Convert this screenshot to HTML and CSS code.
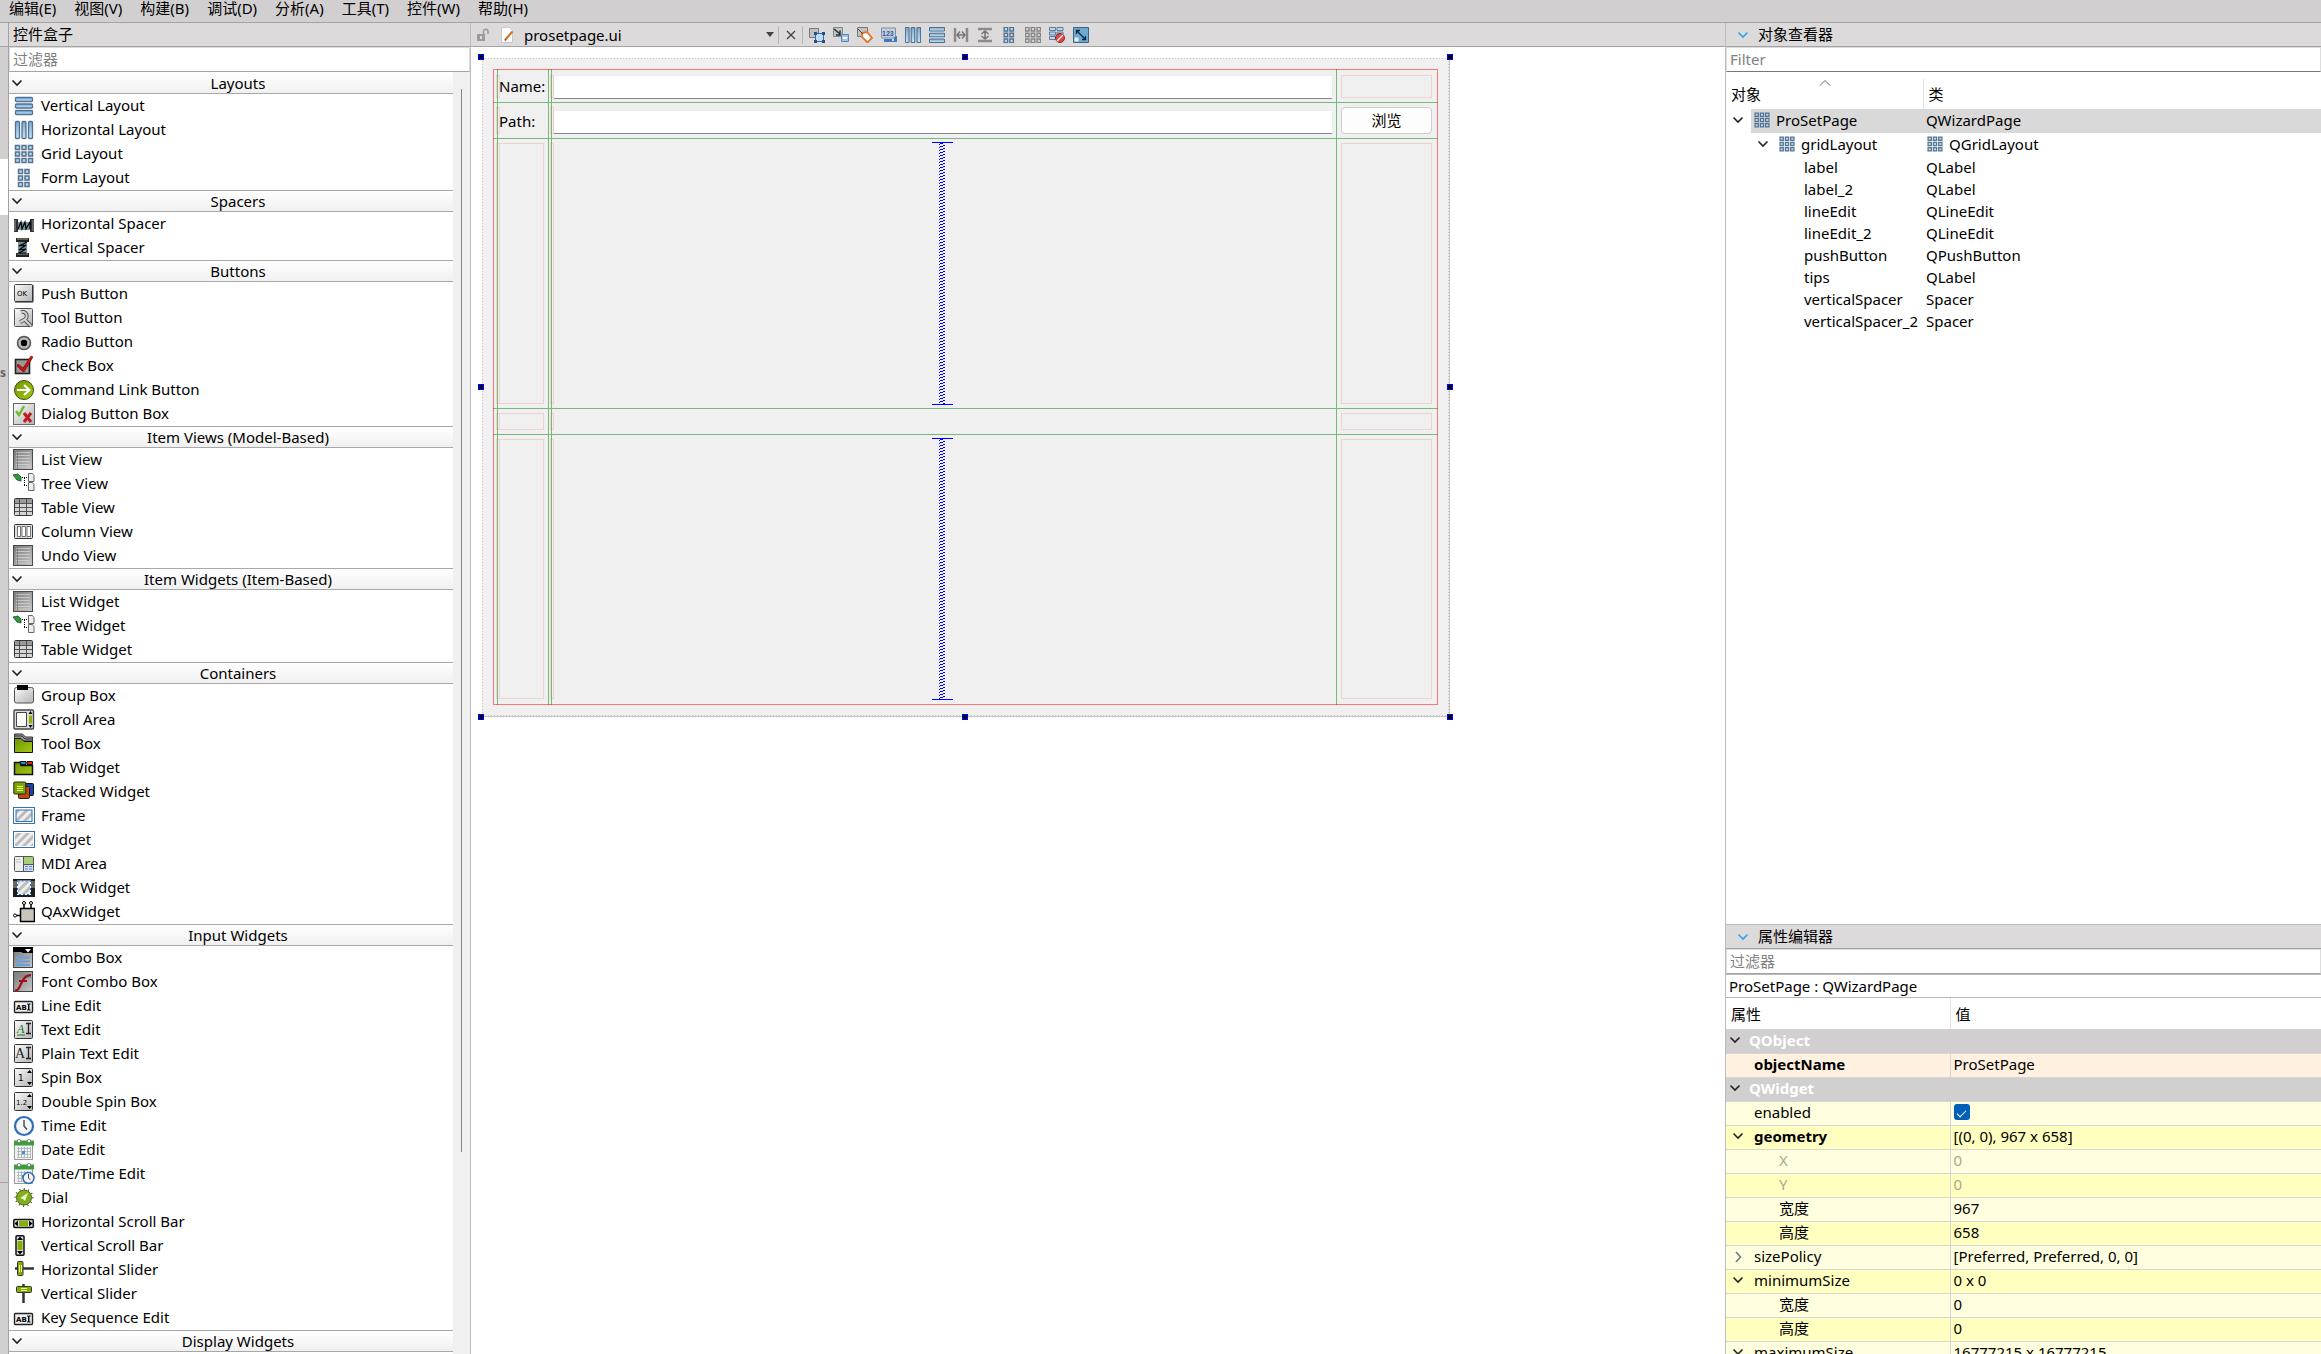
FILE: index.html
```html
<!DOCTYPE html>
<html lang="zh-CN">
<head>
<meta charset="utf-8">
<title>prosetpage.ui</title>
<link rel="stylesheet" href="styles.css">
</head>
<body>
<svg class="sprite" aria-hidden="true">
  <defs>
    <linearGradient id="steel" x1="0" y1="0" x2="0" y2="1"><stop offset="0" stop-color="#7ba8cc"/><stop offset="1" stop-color="#c6e6fa"/></linearGradient>
    <linearGradient id="gray" x1="0" y1="0" x2="1" y2="1"><stop offset="0" stop-color="#fbfbfb"/><stop offset="1" stop-color="#b4b4b4"/></linearGradient>
    <linearGradient id="dark" x1="0" y1="0" x2="1" y2="1"><stop offset="0" stop-color="#777"/><stop offset="1" stop-color="#c8c8c8"/></linearGradient>
    <linearGradient id="lime" x1="0" y1="0" x2="1" y2="1"><stop offset="0" stop-color="#6f9400"/><stop offset="1" stop-color="#a3c916"/></linearGradient>
    <pattern id="hatch" width="6" height="6" patternUnits="userSpaceOnUse" patternTransform="rotate(45)"><rect width="6" height="6" fill="#efefef"/><rect width="3" height="6" fill="#bdbdbd"/></pattern>
    <pattern id="coil" width="6" height="3" patternUnits="userSpaceOnUse"><path d="M4 0h2v1h-2zM1 1h3v1h-3zM0 2h1v1h-1z" fill="#00f"/></pattern>
  </defs>
  <symbol id="chev" viewBox="0 0 12 8"><path d="M1.500 1.500L6 6l4.500-4.500" fill="none" stroke="currentColor" stroke-width="1.600"/></symbol>
  <symbol id="chev-r" viewBox="0 0 12 12"><path d="M4 1l4.500 5L4 11" fill="none" stroke="currentColor" stroke-width="1.600"/></symbol>
  <symbol id="vbox" viewBox="0 0 22 22"><g fill="url(#steel)" stroke="#4f7196" stroke-width="1.300"><rect x="2.500" y="2.500" width="17" height="4" rx="1"/><rect x="2.500" y="9" width="17" height="4" rx="1"/><rect x="2.500" y="15.500" width="17" height="4" rx="1"/></g></symbol>
  <symbol id="hbox" viewBox="0 0 22 22"><g fill="url(#steel)" stroke="#4f7196" stroke-width="1.300"><rect x="2.500" y="2.500" width="4" height="17" rx="1"/><rect x="9" y="2.500" width="4" height="17" rx="1"/><rect x="15.500" y="2.500" width="4" height="17" rx="1"/></g></symbol>
  <symbol id="grid" viewBox="0 0 22 22"><g fill="#b4d8ef" stroke="#55728f" stroke-width="1.500"><path d="M2.500 2.500h4v4h-4zM9 2.500h4v4h-4zM15.500 2.500h4v4h-4zM2.500 9h4v4h-4zM9 9h4v4h-4zM15.500 9h4v4h-4zM2.500 15.500h4v4h-4zM9 15.500h4v4h-4zM15.500 15.500h4v4h-4z"/></g></symbol>
  <symbol id="grid-off" viewBox="0 0 22 22"><g fill="#d2d2d2" stroke="#858585" stroke-width="1.500"><path d="M2.500 2.500h4v4h-4zM9 2.500h4v4h-4zM15.500 2.500h4v4h-4zM2.500 9h4v4h-4zM9 9h4v4h-4zM15.500 9h4v4h-4zM2.500 15.500h4v4h-4zM9 15.500h4v4h-4zM15.500 15.500h4v4h-4z"/></g></symbol>
  <symbol id="form" viewBox="0 0 22 22"><g fill="#b4d8ef" stroke="#55728f" stroke-width="1.500"><path d="M5.500 2.500h4v4h-4zM12 2.500h4v4h-4zM5.500 9h4v4h-4zM12 9h4v4h-4zM5.500 15.500h4v4h-4zM12 15.500h4v4h-4z"/></g></symbol>
  <symbol id="hspacer" viewBox="0 0 22 22"><path d="M1 6h4v13H1zM17 6h4v13h-4z" fill="#333"/><path d="M2 7v11M20 7v11" stroke="#999"/><path d="M5 9h12v8H5z" fill="#78909e"/><path d="M5 16L8 9l1 7 3-7 1 7 4-7v7" fill="none" stroke="#000" stroke-width="1.200"/></symbol>
  <symbol id="vspacer" viewBox="0 0 22 22"><path d="M3 1h13v4H3zM3 16h13v4H3z" fill="#222"/><path d="M4 2h11M4 17h11" stroke="#999"/><path d="M5 5h9v11H5z" fill="#78909e"/><path d="M14 5L6 9l7-1-7 5 7-1-7 4h7" fill="none" stroke="#000" stroke-width="1.200"/></symbol>
  <symbol id="push" viewBox="0 0 22 22"><rect x="1.500" y="1.500" width="18" height="17" rx="1" fill="url(#gray)" stroke="#444"/><path d="M2 19h18V2" fill="none" stroke="#222"/></symbol>
  <symbol id="tool" viewBox="0 0 22 22"><rect x="1.500" y="1.500" width="18" height="18" rx="1" fill="url(#gray)" stroke="#555"/><path d="M8 5a4 4 0 1 1 3 8L7 15M11 12l7 7" fill="none" stroke="#555" stroke-width="4"/><path d="M8 5a4 4 0 1 1 3 8L7 15M11 12l7 7" fill="none" stroke="#ccd3d8" stroke-width="2"/></symbol>
  <symbol id="radio" viewBox="0 0 22 22"><circle cx="11" cy="12" r="6.500" fill="#bbb" stroke="#555" stroke-width="1.500"/><circle cx="11" cy="12" r="3.200"/></symbol>
  <symbol id="check" viewBox="0 0 22 22"><rect x="2.500" y="4.500" width="14" height="14" fill="#999" stroke="#222" stroke-width="1.600"/><path d="M5 9l5 4 8-12 2 1-9 15-2-1-5-5z" fill="#cc1418" stroke="#700" stroke-width=".6"/></symbol>
  <symbol id="link" viewBox="0 0 22 22"><circle cx="11" cy="11" r="9.500" fill="url(#lime)" stroke="#3f4d10"/><path d="M4 11h12M11 6l5.500 5-5.500 5" fill="none" stroke="#fff" stroke-width="2"/></symbol>
  <symbol id="dialog" viewBox="0 0 22 22"><rect x=".5" y=".5" width="21" height="21" fill="url(#gray)" stroke="#666"/><path d="M3 8l3 4L11 3" fill="none" stroke="#6cc02f" stroke-width="2.500"/><path d="M11 10l7 9M18 10l-7 9" stroke="#c01a22" stroke-width="3"/></symbol>
  <symbol id="list" viewBox="0 0 22 22"><rect x=".5" y=".5" width="19" height="20" fill="url(#dark)" stroke="#4a4a4a"/><path d="M3 3.500h14M3 6.500h14M3 9.500h14M3 12.500h14M3 15.500h14M3 18h14" stroke="#d4d4d4" stroke-width=".8"/><path d="M4.500 1v19" stroke="#888"/></symbol>
  <symbol id="tree" viewBox="0 0 22 22"><path d="M0 2l5-1 3 3v4L4 7z" fill="#2f9a3c" stroke="#164f1c" stroke-width=".8"/><path d="M9 4.500h6M11.500 5v8M11 12.500h4" stroke="#000" stroke-dasharray="1 1"/><path d="M15.500.5h4l1.500 2v6h-5.500zM15.500 9.500h4l1.500 2v6h-5.500z" fill="#eee" stroke="#666"/></symbol>
  <symbol id="table" viewBox="0 0 22 22"><rect x="1.500" y="1.500" width="18" height="17" rx="1" fill="#d5d5d5" stroke="#333"/><path d="M2 2h17v4H2z" fill="#999"/><path d="M2 6.500h17M2 10.500h17M2 14.500h17M6.500 2v16M13.500 2v16" stroke="#444" stroke-width=".9"/></symbol>
  <symbol id="column" viewBox="0 0 22 22"><rect x="1.500" y="3.500" width="18" height="14" rx="1" fill="#ddd" stroke="#333"/><path d="M4.500 5.500h3v10h-3zM9 5.500h3.500v10H9zM14 5.500h3.500v10H14z" fill="#fff" stroke="#555" stroke-width=".8"/></symbol>
  <symbol id="group" viewBox="0 0 22 22"><rect x="1.500" y="2.500" width="19" height="15.500" rx="2" fill="url(#gray)" stroke="#555"/><path d="M4 0h11v5H4z"/></symbol>
  <symbol id="scroll" viewBox="0 0 22 22"><rect x="1" y="1" width="19.500" height="19" rx="1" fill="#ddd" stroke="#444" stroke-width="1.400"/><path d="M3.500 3.500h10v14h-10z" fill="#fff" stroke="#444"/><path d="M16 6.500h3v8h-3z" fill="#8bb400"/><path d="M15.500 5l2-3 2 3zM15.500 16l2 3 2-3z"/></symbol>
  <symbol id="toolbox" viewBox="0 0 22 22"><path d="M1.500 1h8l3 3h7v4h-18z" fill="#999" stroke="#333"/><path d="M1.500 5.500H8l3 3h8.500v11h-18z" fill="url(#lime)" stroke="#111"/><path d="M2 3h7l3 3h7" fill="none" stroke="#333"/></symbol>
  <symbol id="tab" viewBox="0 0 22 22"><path d="M1.500 5.500H7l1 3h11.500v9h-18z" fill="url(#lime)" stroke="#111" stroke-width="1.500"/><path d="M7 4.500h6v3H8z" fill="#1c86d8" stroke="#111"/><path d="M14 4.500h5.500v3H14z" fill="#d8201c" stroke="#111"/></symbol>
  <symbol id="stack" viewBox="0 0 22 22"><rect x="11.500" y="2.500" width="9" height="12" rx="1" fill="#1a45a8" stroke="#111"/><rect x="5.500" y="5.500" width="11" height="12" rx="1" fill="#bf4a14" stroke="#222"/><rect x=".8" y="1" width="12" height="12" rx="1" fill="#7fa600" stroke="#222"/><path d="M4 5.500h6M4 7.500h6M4 9.500h6" stroke="#dfff80"/></symbol>
  <symbol id="frame" viewBox="0 0 22 22"><rect x=".5" y="2.500" width="21" height="16" fill="#fff" stroke="#3273bd"/><rect x="3" y="5" width="16" height="11.500" fill="url(#hatch)" stroke="#3273bd"/></symbol>
  <symbol id="widget" viewBox="0 0 22 22"><rect x=".5" y="2.500" width="21" height="16" fill="#fff" stroke="#3273bd"/><rect x="2" y="4" width="18" height="13" fill="url(#hatch)"/></symbol>
  <symbol id="mdi" viewBox="0 0 22 22"><rect x="1.500" y="3.500" width="19" height="15" rx="1" fill="#eee" stroke="#555"/><path d="M11 4h9v7h-9z" fill="#a6cf78"/><path d="M11 12h9v6h-9z" fill="#cfdff5"/><path d="M10.500 4v14M11 11.500h9" stroke="#555"/><path d="M12 13.500h3M16 13.500h3M12 16h3M16 16h3" stroke="#5a89cf"/><path d="M3 6.500h4M3 9h5" stroke="#bbb"/></symbol>
  <symbol id="dock" viewBox="0 0 22 22"><path d="M0 2h22v18H0z" fill="#1c1c1c"/><path d="M0 4h4v7H0zM18 4h4v7h-4z" fill="#666"/><rect x="4.500" y="4" width="13" height="13.500" fill="url(#hatch)" stroke="#fff"/><rect x="4.500" y="4" width="13" height="13.500" fill="none" stroke="#2a6bc0" stroke-dasharray="2 2"/></symbol>
  <symbol id="qax" viewBox="0 0 22 22"><path d="M7.500 7.500h14v13h-14z" fill="#c9c5bd" stroke="#000" stroke-width="1.500"/><path d="M11 7V3M18 7V3M7 14.500H3" stroke="#000" stroke-width="1.500"/><g fill="#fff" stroke="#000"><circle cx="11" cy="2" r="1.500"/><circle cx="18" cy="2" r="1.500"/><circle cx="2" cy="14.500" r="1.500"/></g></symbol>
  <symbol id="combo" viewBox="0 0 22 22"><rect x=".5" y=".5" width="19" height="20" fill="url(#dark)" stroke="#444"/><path d="M0 0h20v6H10L8 5H0z"/><path d="M12 2h6l-3 3.500z" fill="#fff"/><path d="M3 10.500h14M3 14.500h14M3 18h14" stroke="#6aa0dc" stroke-width="2"/></symbol>
  <symbol id="fontcombo" viewBox="0 0 22 22"><rect x=".5" y=".5" width="19" height="20" fill="url(#dark)" stroke="#444"/><path d="M3 3h15v4H3z" fill="#888"/><path d="M2 19c6 3 5-15 16-15M6 10h8" fill="none" stroke="#a01018" stroke-width="2.200"/></symbol>
  <symbol id="lineedit" viewBox="0 0 22 22"><rect x="1.500" y="6.500" width="18" height="11" rx="1" fill="#eee" stroke="#222" stroke-width="1.400"/><path d="M14 9h1.500v6H14M17.500 9H16v6h1.500" fill="none" stroke="#000"/></symbol>
  <symbol id="textedit" viewBox="0 0 22 22"><rect x="1.500" y="1.500" width="18" height="18" rx="1" fill="url(#gray)" stroke="#333"/><path d="M4 16h8" stroke="#157a1e"/><path d="M13 4.500h5M13 14.500h5M15.500 4v11" stroke="#222" stroke-width="1.300"/></symbol>
  <symbol id="plain" viewBox="0 0 22 22"><rect x="1.500" y="1.500" width="18" height="18" rx="1" fill="url(#gray)" stroke="#333"/><path d="M13 4.500h5M13 15.500h5M15.500 4v12" stroke="#222" stroke-width="1.300"/></symbol>
  <symbol id="spin" viewBox="0 0 22 22"><rect x="1.500" y="1.500" width="18" height="18" rx="1" fill="url(#gray)" stroke="#333"/><path d="M14 6l2.500-3L19 6zM14 15l2.500 3 2.500-3z"/></symbol>
  <symbol id="time" viewBox="0 0 22 22"><circle cx="11" cy="11" r="9" fill="#f4f6f7" stroke="#2c6fb8" stroke-width="2.200"/><path d="M11 5v6l3 3.500" fill="none" stroke="#444" stroke-width="1.400"/></symbol>
  <symbol id="date" viewBox="0 0 22 22"><path d="M1.500 3h18v17.500h-18z" fill="#f0f2f3" stroke="#999"/><path d="M1 1.500h20v5H1z" fill="#3e9e38"/><path d="M4 9.500h14M4 12.500h14M4 15.500h14M4 18.500h14M5.500 8v11M8.500 8v11M11.500 8v11M14.500 8v11M17.500 8v11" stroke="#a9b1b8" stroke-width=".8"/><path d="M9 12h3v3H9z" fill="#4b8fdc"/><circle cx="6" cy="2" r="1.700" fill="#eee" stroke="#888"/><circle cx="16" cy="2" r="1.700" fill="#eee" stroke="#888"/></symbol>
  <symbol id="datetime" viewBox="0 0 22 22"><use href="#date" width="22" height="22"/><circle cx="15.500" cy="15" r="5.500" fill="#f4f6f7" stroke="#2c6fb8" stroke-width="1.500"/><path d="M15.500 11v4l2 2" fill="none" stroke="#444"/></symbol>
  <symbol id="dial" viewBox="0 0 22 22"><circle cx="11" cy="10.500" r="8.500" fill="none" stroke="#555" stroke-width="2" stroke-dasharray="1 3.400"/><circle cx="11" cy="10.500" r="7.500" fill="#83ac1c" stroke="#4c6a10"/><path d="M15 6l-3 8-2-2-3-1z" fill="#eef7cf"/></symbol>
  <symbol id="hscroll" viewBox="0 0 22 22"><rect x=".8" y="8.500" width="19.500" height="8" rx="1" fill="#ddd" stroke="#111" stroke-width="1.500"/><path d="M6 10h9v5H6z" fill="#86ae00"/><path d="M5 9.500v6l-3.500-3zM16 9.500v6l3.500-3z"/></symbol>
  <symbol id="vscroll" viewBox="0 0 22 22"><rect x="3" y=".8" width="8" height="19.500" rx="1" fill="#ddd" stroke="#111" stroke-width="1.500"/><path d="M4.500 6h5v9h-5z" fill="#86ae00"/><path d="M4 5h6L7 1.500zM4 16h6l-3 3.500z"/></symbol>
  <symbol id="hslider" viewBox="0 0 22 22"><path d="M2 9.500h19" stroke="#333" stroke-width="2.500"/><rect x="4.500" y="2.500" width="5.500" height="14" rx="1" fill="#86ae00" stroke="#333"/><path d="M6.500 6v7M8.500 6v7" stroke="#e6f5a8"/></symbol>
  <symbol id="vslider" viewBox="0 0 22 22"><path d="M10.500 1v19" stroke="#333" stroke-width="2.500"/><rect x="3.500" y="3.500" width="15" height="6" rx="1" fill="#86ae00" stroke="#333"/><path d="M8 5.500h6M8 7.500h6" stroke="#e6f5a8"/></symbol>
  <symbol id="lock" viewBox="0 0 16 16"><path d="M1 7h8v7H1z" fill="#9b9b9b"/><path d="M7.500 7V4.500a2.200 2.200 0 0 1 4.500 0V7" fill="none" stroke="#9b9b9b" stroke-width="1.500"/><path d="M4 9h2v3H4z" fill="#ddd"/></symbol>
  <symbol id="file" viewBox="0 0 16 16"><path d="M1.500.5h8l3 3v12h-11z" fill="#fff" stroke="#c9c9c9"/><path d="M5 13l7.500-8.500" stroke="#d0782a" stroke-width="2.200"/><path d="M4.500 14l1-2 1 1z" fill="#333"/></symbol>
  <symbol id="e-widgets" viewBox="0 0 16 16"><path d="M.5 1.500h9v9h-9z" fill="#c2c2c2" stroke="#777"/><path d="M6.500 6.500h8v8h-8z" fill="#bcdcf8" stroke="#3568b0"/><path d="M5 5h3v3H5zM13 5h3v3h-3zM5 13h3v3H5zM13 13h3v3h-3z" fill="#244c86"/></symbol>
  <symbol id="e-signals" viewBox="0 0 16 16"><path d="M.5.5h9v9h-9z" fill="#c2c2c2" stroke="#888"/><path d="M8.500 7.500h7v7h-7z" fill="#9cc4ec" stroke="#5f84b4"/><path d="M10 11h4" stroke="#fff" stroke-width="2"/><path d="M1 2l6 5M7 3.500V8H3" fill="none" stroke="#234" stroke-width="1.500"/></symbol>
  <symbol id="e-buddies" viewBox="0 0 16 16"><path d="M.5.5h10v9H.5z" fill="#c2c2c2" stroke="#777"/><path d="M5 6l5-1 5 6-4.500 4.500L5 10z" fill="#fff" stroke="#e0762a" stroke-width="1.800"/><path d="M1 2l5 5" stroke="#444"/></symbol>
  <symbol id="e-tab" viewBox="0 0 16 16"><path d="M.5 1h14v10H.5z" fill="#c9ced6" stroke="#8090a8"/><path d="M3 12h8v2h2v-4l3-1v6H3z" fill="#3c78c4"/></symbol>
  <symbol id="e-hsplit" viewBox="0 0 16 16"><path d="M2 1v14M14 1v14" stroke="#8a8a8a" stroke-width="2.500"/><path d="M4 8h8M7 4.500L4 8l3 3.500M9 4.500L12 8l-3 3.500" fill="none" stroke="#777" stroke-width="1.500"/></symbol>
  <symbol id="e-vsplit" viewBox="0 0 16 16"><path d="M1 2h14M1 14h14" stroke="#8a8a8a" stroke-width="2.500"/><path d="M8 4v8M4.500 7L8 4l3.500 3M4.500 9L8 12l3.500-3" fill="none" stroke="#777" stroke-width="1.500"/></symbol>
  <symbol id="e-break" viewBox="0 0 16 16"><path d="M.5.5h6v3h-6zM8 .5h6v3H8zM.5 5h6v3h-6zM8 5h6v3H8zM.5 9.500h6v3h-6z" fill="#b9d8ee" stroke="#5e7d9c"/><circle cx="11" cy="11" r="4.500" fill="#d84848" stroke="#a02020"/><path d="M8 14l6-6" stroke="#fff" stroke-width="1.300"/></symbol>
  <symbol id="e-adjust" viewBox="0 0 16 16"><path d="M.5.500h15v15H.5z" fill="#6fa9d2" stroke="#3a6488"/><path d="M1.500 10.500h4v4h-4z" fill="#e4f0f8"/><path d="M4 4l8 8M3.500 7V3.500H7M12.500 9v3.500H9" fill="none" stroke="#0c2742" stroke-width="1.300"/></symbol>
</svg>

<nav class="menubar">
  <button>编辑(E)</button><button>视图(V)</button><button>构建(B)</button><button>调试(D)</button><button>分析(A)</button><button>工具(T)</button><button>控件(W)</button><button>帮助(H)</button>
</nav>

<div class="workspace">
  <div class="rail"><div class="rail-head"></div><div class="rail-gap"></div><div class="rail-active"></div><div class="rail-modes">s</div><div class="rail-foot"></div></div>

  <aside class="box">
    <h2 class="title">控件盒子</h2>
    <input class="filter" type="text" placeholder="过滤器" aria-label="过滤器">
    <div class="box-body">
      <div class="cats">
        <section><button class="cat"><svg><use href="#chev"/></svg><span>Layouts</span></button><ul>
          <li><svg><use href="#vbox"/></svg>Vertical Layout</li><li><svg><use href="#hbox"/></svg>Horizontal Layout</li><li><svg><use href="#grid"/></svg>Grid Layout</li><li><svg><use href="#form"/></svg>Form Layout</li></ul></section>
        <section><button class="cat"><svg><use href="#chev"/></svg><span>Spacers</span></button><ul>
          <li><svg><use href="#hspacer"/></svg>Horizontal Spacer</li><li><svg><use href="#vspacer"/></svg>Vertical Spacer</li></ul></section>
        <section><button class="cat"><svg><use href="#chev"/></svg><span>Buttons</span></button><ul>
          <li><svg><use href="#push"/><text class="t-tiny" x="4" y="13">OK</text></svg>Push Button</li><li><svg><use href="#tool"/></svg>Tool Button</li><li><svg><use href="#radio"/></svg>Radio Button</li><li><svg><use href="#check"/></svg>Check Box</li><li><svg><use href="#link"/></svg>Command Link Button</li><li><svg><use href="#dialog"/></svg>Dialog Button Box</li></ul></section>
        <section><button class="cat"><svg><use href="#chev"/></svg><span>Item Views (Model-Based)</span></button><ul>
          <li><svg><use href="#list"/></svg>List View</li><li><svg><use href="#tree"/></svg>Tree View</li><li><svg><use href="#table"/></svg>Table View</li><li><svg><use href="#column"/></svg>Column View</li><li><svg><use href="#list"/></svg>Undo View</li></ul></section>
        <section><button class="cat"><svg><use href="#chev"/></svg><span>Item Widgets (Item-Based)</span></button><ul>
          <li><svg><use href="#list"/></svg>List Widget</li><li><svg><use href="#tree"/></svg>Tree Widget</li><li><svg><use href="#table"/></svg>Table Widget</li></ul></section>
        <section><button class="cat"><svg><use href="#chev"/></svg><span>Containers</span></button><ul>
          <li><svg><use href="#group"/></svg>Group Box</li><li><svg><use href="#scroll"/></svg>Scroll Area</li><li><svg><use href="#toolbox"/></svg>Tool Box</li><li><svg><use href="#tab"/></svg>Tab Widget</li><li><svg><use href="#stack"/></svg>Stacked Widget</li><li><svg><use href="#frame"/></svg>Frame</li><li><svg><use href="#widget"/></svg>Widget</li><li><svg><use href="#mdi"/></svg>MDI Area</li><li><svg><use href="#dock"/></svg>Dock Widget</li><li><svg><use href="#qax"/></svg>QAxWidget</li></ul></section>
        <section><button class="cat"><svg><use href="#chev"/></svg><span>Input Widgets</span></button><ul>
          <li><svg><use href="#combo"/></svg>Combo Box</li><li><svg><use href="#fontcombo"/></svg>Font Combo Box</li><li><svg><use href="#lineedit"/><text class="t-tiny t-bold" x="3" y="15">AB</text></svg>Line Edit</li><li><svg><use href="#textedit"/><text class="t-rich" x="4" y="14">A</text></svg>Text Edit</li><li><svg><use href="#plain"/><text class="t-serif" x="2" y="15">A</text></svg>Plain Text Edit</li><li><svg><use href="#spin"/><text class="t-num" x="5" y="14">1</text></svg>Spin Box</li><li><svg><use href="#spin"/><text class="t-tiny" x="3" y="14">1.2</text></svg>Double Spin Box</li><li><svg><use href="#time"/></svg>Time Edit</li><li><svg><use href="#date"/></svg>Date Edit</li><li><svg><use href="#datetime"/></svg>Date/Time Edit</li><li><svg><use href="#dial"/></svg>Dial</li><li><svg><use href="#hscroll"/></svg>Horizontal Scroll Bar</li><li><svg><use href="#vscroll"/></svg>Vertical Scroll Bar</li><li><svg><use href="#hslider"/></svg>Horizontal Slider</li><li><svg><use href="#vslider"/></svg>Vertical Slider</li><li><svg><use href="#lineedit"/><text class="t-tiny t-bold" x="3" y="15">AB</text></svg>Key Sequence Edit</li></ul></section>
        <section><button class="cat"><svg><use href="#chev"/></svg><span>Display Widgets</span></button></section>
      </div>
      <div class="track"><div class="thumb"></div></div>
    </div>
  </aside>

  <main class="editor">
    <div class="toolbar">
      <svg class="ic16"><use href="#lock"/></svg>
      <svg class="ic16"><use href="#file"/></svg>
      <select class="doc" aria-label="文件"><option>prosetpage.ui</option></select>
      <span class="drop"></span>
      <button class="close" aria-label="关闭"><svg viewBox="0 0 10 10"><path d="M1 1l8 8M9 1L1 9" stroke="#444" stroke-width="1.300"/></svg></button>
      <div class="tools">
        <button aria-label="编辑控件"><svg><use href="#e-widgets"/></svg></button>
        <button aria-label="编辑信号"><svg><use href="#e-signals"/></svg></button>
        <button aria-label="编辑伙伴"><svg><use href="#e-buddies"/></svg></button>
        <button aria-label="编辑顺序"><svg><use href="#e-tab"/><text class="t-order" x="1" y="9">123</text></svg></button>
        <button aria-label="水平布局"><svg viewBox="2 2 18 18"><use href="#hbox" width="22" height="22"/></svg></button>
        <button aria-label="垂直布局"><svg viewBox="2 2 18 18"><use href="#vbox" width="22" height="22"/></svg></button>
        <button aria-label="水平分裂"><svg><use href="#e-hsplit"/></svg></button>
        <button aria-label="垂直分裂"><svg><use href="#e-vsplit"/></svg></button>
        <button aria-label="窗体布局"><svg viewBox="2 2 18 18"><use href="#form" width="22" height="22"/></svg></button>
        <button aria-label="栅格布局"><svg viewBox="2 2 18 18"><use href="#grid-off" width="22" height="22"/></svg></button>
        <button aria-label="打破布局"><svg><use href="#e-break"/></svg></button>
        <button aria-label="调整大小"><svg><use href="#e-adjust"/></svg></button>
      </div>
    </div>
    <div class="canvas">
      <form class="page">
        <label for="n">Name:</label><input id="n" type="text"><span></span>
        <label for="p">Path:</label><input id="p" type="text"><button type="button">浏览</button>
        <svg class="guides" width="980" height="672" viewBox="-7 -7 980 672" shape-rendering="crispEdges" aria-hidden="true">
          <path d="M0 .5H967M.5 0V657M966.500 0V658M0 657.500H967" stroke="#c4c4c4" stroke-dasharray="1 2"/>
          <path d="M967.500 0V659M0 658.500H968" stroke="#c6c6c6"/>
          <path d="M11 44.500H956M11 80.500H956M11 350.500H956M11 376.500H956M15.500 11V647M66.500 11V647M69.500 11V647M854.500 11V647" stroke="#008000" stroke-opacity=".5"/>
          <rect x="11.500" y="11.500" width="944" height="635" fill="none" stroke="#f00" stroke-opacity=".5"/>
          <g fill="none" stroke="#f00" stroke-opacity=".13"><path d="M14.500 17.500h3v22h-3zM68.500 17.500h3v22h-3zM859.500 17.500h90v22h-90zM14.500 49.500h3v26h-3zM68.500 49.500h3v26h-3zM14.500 85.500h3v260h-3zM17.500 85.500h44v260h-44zM68.500 85.500h3v260h-3zM859.500 85.500h90v260h-90zM14.500 355.500h3v16h-3zM17.500 355.500h44v16h-44zM68.500 355.500h3v16h-3zM859.500 355.500h90v16h-90zM14.500 381.500h3v259h-3zM17.500 381.500h44v259h-44zM68.500 381.500h3v259h-3zM859.500 381.500h90v259h-90z"/></g>
          <g transform="translate(457 84)"><rect width="6" height="262" fill="url(#coil)"/><path d="M-7 .5H14M-7 262.500H14" stroke="#00f"/></g>
          <g transform="translate(457 380)"><rect width="6" height="262" fill="url(#coil)"/><path d="M-7 .5H14M-7 261.500H14" stroke="#00f"/></g>
          <g stroke="#00f"><path d="M-3.500-3.500h5v5h-5zM480.500-3.500h5v5h-5zM965.500-3.500h5v5h-5zM-3.500 326.500h5v5h-5zM965.500 326.500h5v5h-5zM-3.500 656.500h5v5h-5zM480.500 656.500h5v5h-5zM965.500 656.500h5v5h-5z"/></g>
        </svg>
      </form>
    </div>
  </main>

  <aside class="docks">
    <section class="inspector">
      <h2 class="title fold"><svg><use href="#chev"/></svg>对象查看器</h2>
      <input class="filter strong" type="text" placeholder="Filter" aria-label="Filter">
      <table class="objects">
        <colgroup><col class="c-obj"><col></colgroup>
        <thead><tr><th>对象<svg class="sort" viewBox="0 0 12 8"><path d="M1 6.500L6 1.500l5 5" fill="none" stroke="#666"/></svg></th><th>类</th></tr></thead>
        <tbody>
          <tr class="sel"><td><div class="cell"><svg class="arrow"><use href="#chev"/></svg><svg class="ic16"><use href="#grid"/></svg>ProSetPage</div></td><td>QWizardPage</td></tr>
          <tr class="lay"><td><div class="cell"><svg class="arrow"><use href="#chev"/></svg><svg class="ic16"><use href="#grid"/></svg>gridLayout</div></td><td><div class="cell"><svg class="ic16"><use href="#grid"/></svg>QGridLayout</div></td></tr>
          <tr><td>label</td><td>QLabel</td></tr>
          <tr><td>label_2</td><td>QLabel</td></tr>
          <tr><td>lineEdit</td><td>QLineEdit</td></tr>
          <tr><td>lineEdit_2</td><td>QLineEdit</td></tr>
          <tr><td>pushButton</td><td>QPushButton</td></tr>
          <tr><td>tips</td><td>QLabel</td></tr>
          <tr><td>verticalSpacer</td><td>Spacer</td></tr>
          <tr><td>verticalSpacer_2</td><td>Spacer</td></tr>
        </tbody>
      </table>
    </section>
    <section class="properties">
      <h2 class="title fold"><svg><use href="#chev"/></svg>属性编辑器</h2>
      <input class="filter" type="text" placeholder="过滤器" aria-label="过滤器">
      <p class="current">ProSetPage : QWizardPage</p>
      <table class="props">
        <colgroup><col class="c-prop"><col></colgroup>
        <thead><tr><th>属性</th><th>值</th></tr></thead>
        <tbody>
          <tr class="grp"><td colspan="2"><svg class="arrow"><use href="#chev"/></svg>QObject</td></tr>
          <tr class="peach"><td><b>objectName</b></td><td>ProSetPage</td></tr>
          <tr class="grp"><td colspan="2"><svg class="arrow"><use href="#chev"/></svg>QWidget</td></tr>
          <tr class="pale"><td><label for="en">enabled</label></td><td><input id="en" type="checkbox" checked></td></tr>
          <tr><td class="open"><svg class="arrow"><use href="#chev"/></svg><b>geometry</b></td><td>[(0, 0), 967 x 658]</td></tr>
          <tr class="pale off"><td class="sub">X</td><td>0</td></tr>
          <tr class="off"><td class="sub">Y</td><td>0</td></tr>
          <tr class="pale"><td class="sub">宽度</td><td>967</td></tr>
          <tr><td class="sub">高度</td><td>658</td></tr>
          <tr class="pale"><td class="open"><svg class="arrow shut"><use href="#chev-r"/></svg>sizePolicy</td><td>[Preferred, Preferred, 0, 0]</td></tr>
          <tr><td class="open"><svg class="arrow"><use href="#chev"/></svg>minimumSize</td><td>0 x 0</td></tr>
          <tr class="pale"><td class="sub">宽度</td><td>0</td></tr>
          <tr><td class="sub">高度</td><td>0</td></tr>
          <tr class="pale"><td class="open"><svg class="arrow"><use href="#chev"/></svg>maximumSize</td><td>16777215 x 16777215</td></tr>
        </tbody>
      </table>
    </section>
  </aside>
</div>
</body>
</html>
```
FILE: styles.css
```css
* { box-sizing: border-box; }
body {
  margin: 0;
  height: 100vh;
  overflow: hidden;
  display: flex;
  flex-direction: column;
  background: #fff;
  color: #000;
  font: 15px/20px "Noto Sans", "Noto Sans CJK SC", sans-serif;
}
button, input, select { font: inherit; color: inherit; margin: 0; padding: 0; border: 0; background: none; border-radius: 0; outline: 0; }
ul { list-style: none; margin: 0; padding: 0; }
svg { display: block; flex: none; }
.sprite { position: absolute; width: 0; height: 0; }
.ic16 { width: 18px; height: 18px; }

/* Letters inside the palette icons */
.t-tiny { font: 7px "DejaVu Sans", sans-serif; }
.t-bold { font-weight: bold; }
.t-num { font: 9px "DejaVu Sans", sans-serif; }
.t-serif { font: 14px "Liberation Serif", serif; fill: #222; }
.t-rich { font: italic 12px "Liberation Serif", serif; fill: #157a1e; }
.t-order { font: bold 7px "Liberation Sans", sans-serif; fill: #2a5aa0; }

.menubar { display: flex; gap: 18px; height: 23px; flex: none; padding: 0 9px; background: #d1cfd0; border-bottom: 1px solid #a3a3a3; }
.menubar button { line-height: 16px; height: 16px; white-space: nowrap; }

.workspace { flex: 1; min-height: 0; display: flex; }

.rail { width: 9px; flex: none; display: flex; flex-direction: column; background: #d1cfd0; border-right: 1px solid #a3a3a3; overflow: hidden; }
.rail-head { height: 24px; background: #dcdadb; border-bottom: 1px solid #a3a3a3; }
.rail-gap { height: 112px; }
.rail-active { height: 56px; background: #fff; }
.rail-modes { flex: 1; padding-top: 148px; font-size: 12px; font-weight: bold; line-height: 20px; color: #666; border-bottom: 1px solid #a3a3a3; }
.rail-foot { height: 171px; }

.title { margin: 0; height: 24px; padding: 0 4px; font-size: 15px; font-weight: normal; line-height: 23px; background: #dcdadb; border-bottom: 1px solid #a3a3a3; }
.fold { display: flex; align-items: center; gap: 9px; padding-left: 11px; }
.fold svg { width: 12px; height: 8px; color: #35a3e8; }
.filter { display: block; width: 100%; height: 25px; padding: 0 3px 2px; background: #fff; border: 1px solid #dcdcdc; border-bottom-color: #a3a3a3; }
.filter::placeholder { color: #808080; opacity: 1; }
.strong { border-bottom-color: #777; }

.box { width: 462px; flex: none; display: flex; flex-direction: column; border-right: 1px solid #bdbdbd; }
.box-body { flex: 1; min-height: 0; display: flex; }
.cats { flex: 1; overflow: hidden; }
.cat { display: flex; align-items: center; width: 100%; height: 22px; line-height: 20px; padding-left: 2px; background: linear-gradient(#fff, #f0f0f0); border-top: 1px solid #a8a8a8; border-bottom: 1px solid #a8a8a8; }
section:first-child > .cat { border-top-color: #fff; }
.cat svg { width: 12px; height: 8px; color: #222; }
.cat span { flex: 1; text-align: center; }
.cats li { display: flex; gap: 6px; height: 24px; padding: 1px 0 0 4px; line-height: 20px; }
.cats li svg { width: 22px; height: 22px; }
.track { width: 17px; background: #f0f0f0; padding: 17px 8px 0; }
.thumb { width: 1px; height: 84%; background: #858585; }

.editor { flex: 1; min-width: 0; display: flex; flex-direction: column; }
.toolbar { display: flex; align-items: center; height: 24px; flex: none; padding-left: 5px; background: #dcdadb; border-bottom: 1px solid #a3a3a3; }
.toolbar > .ic16 { width: 16px; height: 16px; margin-right: 8px; }
.doc { appearance: none; width: 240px; height: 22px; line-height: 22px; }
.drop { margin: 0 4px 0 2px; border: 4px solid transparent; border-top: 5px solid #444; border-bottom: 0; }
.close { width: 25px; height: 18px; display: grid; place-items: center; border: solid #b5b5b5; border-width: 0 1px; }
.close svg { width: 10px; height: 10px; }
.tools { display: flex; padding-left: 2px; }
.tools button { width: 24px; height: 22px; display: grid; place-items: center; }
.tools svg { width: 16px; height: 16px; }

.canvas { flex: 1; padding: 11px; overflow: hidden; }
/* The designed page has the size that its geometry property gives. */
.page { position: relative; width: 967px; height: 658px; padding: 11px; background: #f0f0f0; display: grid; grid-template-columns: 56px 780px 95px; grid-template-rows: 30px 35px; column-gap: 4px; align-content: start; align-items: end; }
.page label { padding-left: 6px; padding-bottom: 2px; line-height: 22px; }
.page input { height: 24px; background: #fff; border: 1px solid #ececec; border-bottom-color: #868686; border-radius: 2px; }
.page button { height: 27px; margin-left: 4px; padding-bottom: 2px; background: #fdfdfd; border: 1px solid #ccc; border-radius: 4px; }
.guides { position: absolute; left: -7px; top: -7px; pointer-events: none; }

.docks { width: 596px; flex: none; display: flex; flex-direction: column; border-left: 1px solid #bdbdbd; }
.inspector { flex: 1; min-height: 0; overflow: hidden; }
table { width: 100%; table-layout: fixed; border-collapse: collapse; }
th { text-align: left; font-weight: normal; height: 30px; padding: 0 5px; }
th + th { border-left: 1px solid #e2e2e2; }
td { padding: 0 3px 2px; white-space: nowrap; }
.cell { display: flex; align-items: center; gap: 5px; }
.arrow { width: 12px; height: 8px; color: #222; }

.objects { margin-top: 7px; }
.c-obj { width: 197px; }
.objects th:first-child { position: relative; }
.sort { position: absolute; left: 93px; top: 0; width: 12px; height: 8px; }
.objects td { height: 22px; line-height: 20px; }
.objects td:first-child { padding-left: 78px; padding-right: 0; }
.objects .sel td, .objects .lay td { height: 24px; }
.objects .sel td { background: #d9d9d9; }
.objects .sel td:first-child { padding-left: 6px; background: linear-gradient(90deg, #fff 25px, #d9d9d9 25px); }
.objects .lay td:first-child { padding-left: 31px; }
.objects .arrow { margin-right: 4px; }

.properties { height: 430px; flex: none; overflow: hidden; border-top: 1px solid #bdbdbd; }
.current { margin: 0; height: 24px; padding: 0 3px; line-height: 22px; border: 1px solid #b8b8b8; border-right: 0; border-left: 0; }
.c-prop { width: 224px; }
.props thead th { height: 31px; }
.props td { height: 24px; line-height: 20px; background: #ffffbf; border-bottom: 1px solid #d6d6d6; }
.props td:first-child { padding-left: 28px; border-right: 1px solid #d6d6d6; }
.props .pale td { background: #ffffdf; }
.props .peach td { background: #fff0df; }
.props .off td { color: #a9a98c; }
.props .grp td { padding-left: 3px; background: #d1cfd0; color: #fff; font-weight: bold; border-right: 0; }
.props td.sub { padding-left: 53px; }
.props td.open { padding-left: 6px; }
.props .arrow { display: inline-block; margin-right: 10px; vertical-align: 2px; }
.props .grp .arrow { margin-right: 8px; }
.props .shut { height: 12px; color: #777; vertical-align: -1px; }
.props input { appearance: none; width: 16px; height: 16px; border-radius: 3px; background: #005fb8; display: grid; place-items: center; }
.props input::before { content: ""; width: 8px; height: 4px; border: solid #fff; border-width: 0 0 1px 1px; transform: rotate(-45deg); }
```
